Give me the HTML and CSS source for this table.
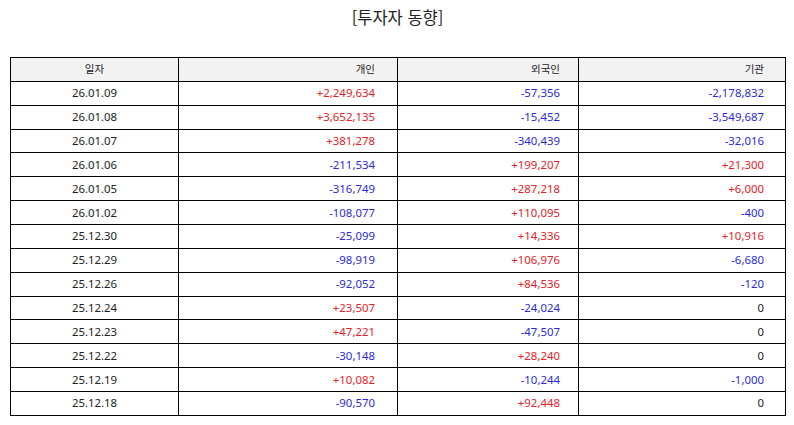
FILE: index.html
```html
<!DOCTYPE html>
<html lang="ko">
<head>
<meta charset="utf-8">
<link rel="stylesheet" href="styles.css">
</head>
<body>
<h1 class="title">[투자자 동향]</h1>
<table class="flow">
<colgroup>
<col class="c-date"><col class="c-ind"><col class="c-for"><col class="c-ins">
</colgroup>
<thead>
<tr><th class="date">일자</th><th class="ind">개인</th><th class="for">외국인</th><th class="ins">기관</th></tr>
</thead>
<tbody>
<tr><td class="date">26.01.09</td><td class="ind up">+2,249,634</td><td class="for dn">-57,356</td><td class="ins dn">-2,178,832</td></tr>
<tr><td class="date">26.01.08</td><td class="ind up">+3,652,135</td><td class="for dn">-15,452</td><td class="ins dn">-3,549,687</td></tr>
<tr><td class="date">26.01.07</td><td class="ind up">+381,278</td><td class="for dn">-340,439</td><td class="ins dn">-32,016</td></tr>
<tr><td class="date">26.01.06</td><td class="ind dn">-211,534</td><td class="for up">+199,207</td><td class="ins up">+21,300</td></tr>
<tr><td class="date">26.01.05</td><td class="ind dn">-316,749</td><td class="for up">+287,218</td><td class="ins up">+6,000</td></tr>
<tr><td class="date">26.01.02</td><td class="ind dn">-108,077</td><td class="for up">+110,095</td><td class="ins dn">-400</td></tr>
<tr><td class="date">25.12.30</td><td class="ind dn">-25,099</td><td class="for up">+14,336</td><td class="ins up">+10,916</td></tr>
<tr><td class="date">25.12.29</td><td class="ind dn">-98,919</td><td class="for up">+106,976</td><td class="ins dn">-6,680</td></tr>
<tr><td class="date">25.12.26</td><td class="ind dn">-92,052</td><td class="for up">+84,536</td><td class="ins dn">-120</td></tr>
<tr><td class="date">25.12.24</td><td class="ind up">+23,507</td><td class="for dn">-24,024</td><td class="ins">0</td></tr>
<tr><td class="date">25.12.23</td><td class="ind up">+47,221</td><td class="for dn">-47,507</td><td class="ins">0</td></tr>
<tr><td class="date">25.12.22</td><td class="ind dn">-30,148</td><td class="for up">+28,240</td><td class="ins">0</td></tr>
<tr><td class="date">25.12.19</td><td class="ind up">+10,082</td><td class="for dn">-10,244</td><td class="ins dn">-1,000</td></tr>
<tr><td class="date">25.12.18</td><td class="ind dn">-90,570</td><td class="for up">+92,448</td><td class="ins">0</td></tr>
</tbody>
</table>
</body>
</html>
```
FILE: styles.css
```css
html, body {
  margin: 0;
  padding: 0;
  background: #ffffff;
}
body {
  padding: 0 9px 0 10px;
  font-family: "Noto Sans", "Noto Sans CJK KR", sans-serif;
  color: #222222;
}
.title {
  margin: 0;
  height: 57px;
  padding-top: 5px;
  box-sizing: border-box;
  text-align: center;
  font-family: "Noto Sans CJK KR", sans-serif;
  font-weight: 400;
  font-size: 16.5px;
  line-height: 24px;
  color: #222222;
}
.flow {
  width: 776px;
  border-collapse: collapse;
  table-layout: fixed;
  font-size: 11.4px;
}
.c-date { width: 168px; }
.c-ind { width: 219px; }
.c-for { width: 181px; }
.c-ins { width: 207px; }
.flow tr {
  height: 23.87px;
}
.flow th, .flow td {
  border: 1px solid #000000;
  padding: 0;
  vertical-align: middle;
  line-height: 14px;
  white-space: nowrap;
}
.flow th {
  background: #f2f2f2;
  font-family: "Noto Sans CJK KR", sans-serif;
  font-weight: 400;
  font-size: 10.5px;
  color: #222222;
}
.flow td {
  color: #222222;
}
.flow .date { text-align: center; }
.flow .ind { text-align: right; padding-right: 22px; }
.flow .for { text-align: right; padding-right: 18px; }
.flow .ins { text-align: right; padding-right: 21px; }
.flow .up { color: #e52129; }
.flow .dn { color: #2b2bd6; }
```
